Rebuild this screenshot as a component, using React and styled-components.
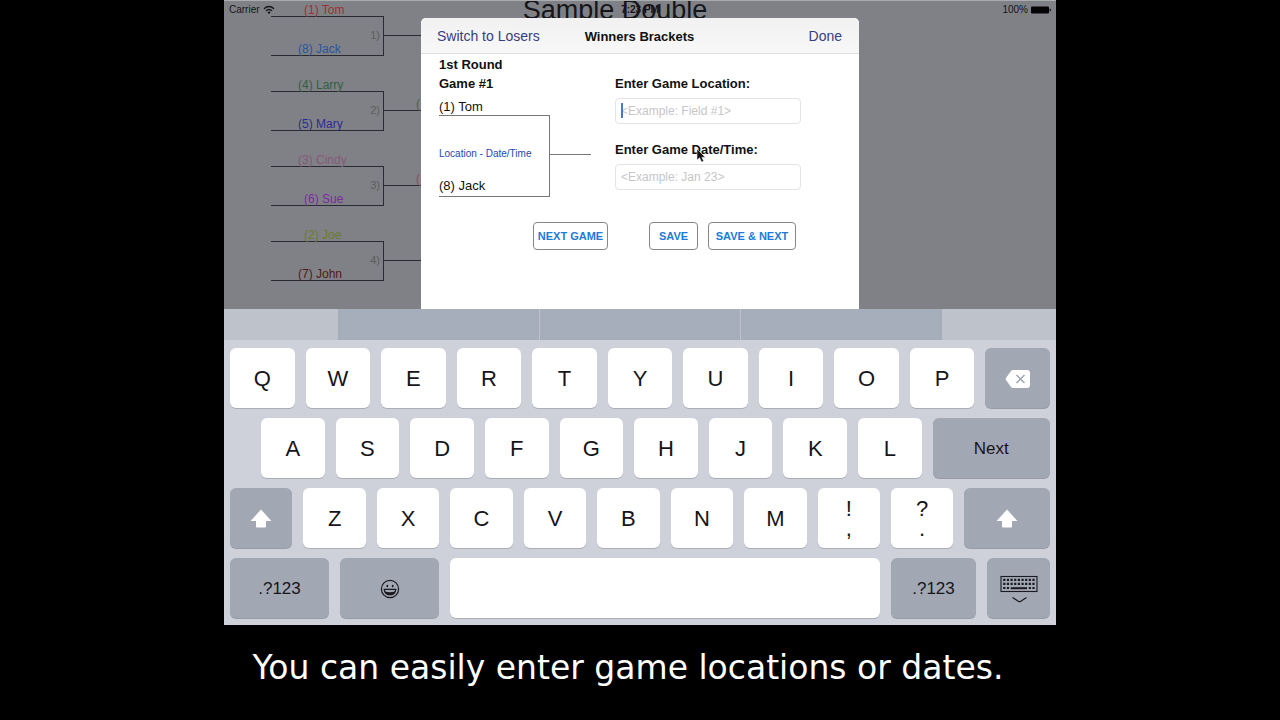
import React from 'react';
import styled, { createGlobalStyle } from 'styled-components';

const colors = {
  dim: '#808186',
  line: '#2b2b33',
  keyboard: '#ced1d9',
  darkKey: '#a2a7b4',
  navLink: '#35407f',
  action: '#1b7bd8',
  rule: '#777777'
};

const fonts = {
  ui: '"Liberation Sans", Arial, Helvetica, sans-serif',
  caption: '"DejaVu Sans", Verdana, sans-serif'
};

const GlobalStyle = createGlobalStyle`
  * {
    box-sizing: border-box;
  }
  body {
    margin: 0;
    background: #000;
    font-family: ${fonts.ui};
  }
  button, input {
    font-family: inherit;
    margin: 0;
  }
`;

const StyledPage = styled.main`
  min-height: 100vh;
  overflow: hidden;
`;

const StyledTablet = styled.div`
  width: 65%;
  margin: 0 auto;
`;

const StyledScreen = styled.div`
  position: relative;
  overflow: hidden;
  background: ${colors.dim};
  border-top: 1px solid #a9adae;
`;

const StyledStatusBar = styled.div`
  position: absolute;
  top: 0;
  left: 0;
  right: 0;
  display: grid;
  grid-template-columns: 1fr auto 1fr;
  align-items: center;
  padding: 3px 5px;
  font-size: 10px;
  line-height: 12px;
  color: #14141a;
`;

const StyledStatusGroup = styled.div`
  display: flex;
  align-items: center;
  gap: 3px;
  justify-content: ${({ $end }) => ($end ? 'flex-end' : 'flex-start')};
`;

const StyledBoard = styled.div`
  display: grid;
  width: 94%;
  padding: 1px 0 28px;
`;

const StyledBoardTitle = styled.h1`
  grid-area: 1 / 1;
  justify-self: center;
  margin: 0;
  height: 17px;
  display: flex;
  align-items: center;
  font-size: 27px;
  font-weight: 400;
  color: #16161a;
`;

const StyledRound = styled.div`
  grid-area: 1 / 1;
  display: flex;
  flex-direction: column;
  gap: 21px;
  padding-left: 47px;
`;

const StyledGame = styled.div`
  display: grid;
  grid-template-columns: 113px 40px;
  font-size: 12px;
  line-height: 11px;
`;

const StyledTopSlot = styled.div`
  height: 15px;
  display: flex;
  align-items: flex-end;
  padding-left: ${({ $short }) => ($short ? 33 : 27)}px;
  border-bottom: 1px solid ${colors.line};
  color: ${({ $color }) => $color};
`;

const StyledBottomSlot = styled.div`
  grid-column: 1;
  height: 39px;
  display: flex;
  flex-direction: column;
  justify-content: space-between;
  padding-top: 13px;
  border-right: 1px solid ${colors.line};
  border-bottom: 1px solid ${colors.line};
`;

const StyledGameNumber = styled.span`
  align-self: flex-end;
  padding-right: 3px;
  font-size: 11px;
  color: #5c5c62;
`;

const StyledPlayer = styled.span`
  padding-left: ${({ $short }) => ($short ? 33 : 27)}px;
  color: ${({ $color }) => $color};
`;

const StyledAdvance = styled.div`
  grid-column: 2;
  height: 19px;
  display: flex;
  align-items: flex-end;
  justify-content: flex-end;
  padding: 0 4px 0 0;
  border-bottom: 1px solid ${colors.line};
  color: ${({ $color }) => $color};
`;

const StyledOverlay = styled.div`
  position: absolute;
  inset: 17px 0 0;
  display: flex;
  justify-content: center;
`;

const StyledModal = styled.section`
  width: 438px;
  background: #fff;
  border-radius: 5px 5px 0 0;
  overflow: hidden;
`;

const StyledModalHeader = styled.header`
  display: grid;
  grid-template-columns: 1fr auto 1fr;
  align-items: center;
  height: 36px;
  padding: 1px 17px 0 16px;
  background: linear-gradient(#f1f1f2, #f8f8f8);
  border-bottom: 1px solid #dededf;
`;

const StyledNavButton = styled.button`
  justify-self: ${({ $end }) => ($end ? 'end' : 'start')};
  padding: 0;
  border: 0;
  background: none;
  font-size: 14px;
  color: ${colors.navLink};
`;

const StyledModalTitle = styled.h2`
  margin: 0;
  font-size: 13px;
  font-weight: 700;
  color: #111;
`;

const StyledModalBody = styled.div`
  display: grid;
  grid-template-columns: 152px 186px;
  column-gap: 24px;
  padding: 1px 18px;
  font-size: 13px;
  line-height: 19px;
  color: #111;
`;

const StyledMatchHeading = styled.h3`
  margin: 0;
  font-size: 13px;
  font-weight: 700;
`;

const StyledMatch = styled.div`
  display: grid;
  grid-template-columns: 111px 41px;
`;

const StyledHome = styled.div`
  height: 23px;
  padding-top: 4px;
  border-bottom: 1px solid ${colors.rule};
`;

const StyledAway = styled.div`
  grid-column: 1;
  height: 81px;
  display: flex;
  flex-direction: column;
  justify-content: space-between;
  padding: 28px 0 1px;
  border-right: 1px solid ${colors.rule};
  border-bottom: 1px solid ${colors.rule};
`;

const StyledPlace = styled.span`
  font-size: 10px;
  color: #2348b0;
`;

const StyledWinnerLine = styled.div`
  height: 39px;
  border-bottom: 1px solid ${colors.rule};
`;

const StyledForm = styled.form`
  display: contents;
`;

const StyledFields = styled.div`
  display: flex;
  flex-direction: column;
  gap: 16px;
  padding-top: 19px;
`;

const StyledField = styled.div`
  position: relative;
  display: flex;
  flex-direction: column;
  gap: 5px;
`;

const StyledLabel = styled.label`
  font-weight: 700;
`;

const StyledInput = styled.input`
  width: 100%;
  height: 26px;
  padding: 0 5px;
  border: 1px solid #e3e3e4;
  border-radius: 4px;
  background: #fff;
  font-size: 12px;
  color: #111;
  outline: none;
  &::placeholder {
    color: #c6c6c9;
  }
`;

const StyledCaret = styled.span`
  position: absolute;
  left: 6px;
  bottom: 6px;
  width: 2px;
  height: 15px;
  background: #4a78c8;
`;

const StyledPointer = styled.svg`
  position: absolute;
  left: 81px;
  top: 8px;
  width: 10px;
  height: 15px;
`;

const StyledActions = styled.div`
  grid-column: 1 / -1;
  display: flex;
  justify-content: flex-end;
  gap: 10px;
  padding: 25px 5px 0 0;
`;

const StyledActionButton = styled.button`
  width: ${({ $width }) => $width}px;
  height: 28px;
  padding: 0;
  margin-right: ${({ $apart }) => ($apart ? 31 : 0)}px;
  border: 1px solid #84868a;
  border-radius: 4px;
  background: #fff;
  font-size: 11px;
  font-weight: 700;
  color: ${colors.action};
`;

const StyledSuggestions = styled.div`
  display: grid;
  grid-template-columns: repeat(3, 1fr);
  gap: 1px;
  height: 31px;
  padding: 0 114px;
  background: #bec2ca;
`;

const StyledSuggestion = styled.div`
  background: #a7aebb;
`;

const StyledKeyboard = styled.div`
  background: ${colors.keyboard};
`;

const StyledRows = styled.div`
  display: flex;
  flex-direction: column;
  gap: 10px;
  padding: 8px 6px 7px;
`;

const StyledRow = styled.div`
  display: grid;
  grid-template-columns: ${({ $columns }) => $columns};
  gap: 11px;
  padding-left: ${({ $indent }) => ($indent ? 31 : 0)}px;
`;

const StyledKey = styled.button`
  display: flex;
  flex-direction: column;
  align-items: center;
  justify-content: center;
  min-width: 0;
  height: 60px;
  padding: 1px 0 0;
  border: 0;
  border-radius: 6px;
  background: ${({ $dark }) => ($dark ? colors.darkKey : '#fff')};
  box-shadow: 0 1px 0 ${({ $dark }) => ($dark ? '#979ba6' : '#aaaeb6')};
  font-size: ${({ $dark }) => ($dark ? 17 : 22)}px;
  line-height: 20px;
  color: #15151a;
`;

const StyledCaption = styled.p`
  margin: 0;
  padding: 23px 24px 0 0;
  font-family: ${fonts.caption};
  font-size: 33px;
  line-height: 40px;
  text-align: center;
  white-space: nowrap;
  color: #fff;
`;

const games = [
  { id: 1, top: '(1) Tom', topColor: '#9c3232', bottom: '(8) Jack', bottomColor: '#2756a0' },
  { id: 2, top: '(4) Larry', topColor: '#33603f', bottom: '(5) Mary', bottomColor: '#2d2a94', next: '#48604c' },
  { id: 3, top: '(3) Cindy', topColor: '#875878', bottom: '(6) Sue', bottomColor: '#7a2c9c', next: '#a04458' },
  { id: 4, top: '(2) Joe', topColor: '#6a7c2a', bottom: '(7) John', bottomColor: '#4c1c1c' }
];

const isShort = (name) => name.length < 8;

const WifiIcon = () => (
  <svg width="12" height="10" viewBox="0 0 12 10" fill="none" stroke="currentColor" strokeWidth="1.4">
    <path d="M1 3.8Q6 -0.6 11 3.8" />
    <path d="M2.9 5.8Q6 3.1 9.1 5.8" />
    <path d="M4.4 7.2Q6 6 7.6 7.2L6 9Z" fill="currentColor" stroke="none" />
  </svg>
);

const BatteryIcon = () => (
  <svg width="20" height="8" viewBox="0 0 20 8" fill="#050508">
    <rect x="0" y="0.5" width="18" height="7" rx="1" />
    <path d="M18.6 2.4Q20 3 20 4T18.6 5.6Z" />
  </svg>
);

const ShiftIcon = () => (
  <svg width="22" height="20" viewBox="0 0 22 20" fill="#fff">
    <path d="M11 0.5L21.4 12H16V17.5Q16 18.5 15 18.5H7Q6 18.5 6 17.5V12H0.6Z" />
  </svg>
);

const DeleteIcon = () => (
  <svg width="26" height="20" viewBox="0 0 26 20">
    <path d="M8 1H22Q25 1 25 4V16Q25 19 22 19H8Q7 19 6 18L1 11Q0.3 10 1 9L6 2Q7 1 8 1Z" fill="#fff" />
    <path d="M11.5 6L19.5 14M19.5 6L11.5 14" stroke="#9fa4b1" strokeWidth="1.5" fill="none" />
  </svg>
);

const EmojiIcon = () => (
  <svg width="20" height="20" viewBox="0 0 20 20" fill="none" stroke="#1a1a20" strokeWidth="1.2">
    <circle cx="10" cy="10" r="8.6" />
    <ellipse cx="7.3" cy="7" rx="0.9" ry="1.3" fill="#1a1a20" stroke="none" />
    <ellipse cx="12.7" cy="7" rx="0.9" ry="1.3" fill="#1a1a20" stroke="none" />
    <path d="M4.2 10.4H15.8Q15.2 15.8 10 15.8T4.2 10.4Z" />
    <path d="M4.8 12.6Q10 14 15.2 12.6Q14 15.8 10 15.8T4.8 12.6Z" fill="#1a1a20" stroke="none" />
  </svg>
);

const HideKeyboardIcon = () => (
  <svg width="38" height="28" viewBox="0 0 38 28" fill="none" stroke="#1a1a20">
    <rect x="1" y="1.5" width="36" height="15" strokeWidth="1.1" />
    <path d="M3.2 4.8H35M3.2 8.8H35" strokeWidth="2.2" strokeDasharray="2.2 1.45" />
    <path d="M3.2 13H9.1M28.75 13H34.7" strokeWidth="2.2" strokeDasharray="2.2 1.45" />
    <path d="M10.8 13.2H27" strokeWidth="2" />
    <path d="M12.5 22.5L18.6 26.4Q19.5 27 20.4 26.4L26.5 22.5" strokeWidth="1.2" />
  </svg>
);

const Pointer = () => (
  <StyledPointer viewBox="0 0 10 15">
    <path d="M1 1V12L3.6 9.8L5.6 14L7.6 13L5.8 9.2H9.2Z" fill="#111" stroke="#ddd" strokeWidth="0.6" />
  </StyledPointer>
);

const Key = ({ label, dark, children }) => (
  <StyledKey type="button" $dark={dark} aria-label={label}>{children}</StyledKey>
);

const renderLetters = (letters) => letters.split('').map((letter) => (
  <Key key={letter}>{letter}</Key>
));

const Board = () => (
  <StyledBoard>
    <StyledBoardTitle>Sample Double</StyledBoardTitle>
    <StyledRound>
      {games.map((game) => (
        <StyledGame key={game.id}>
          <StyledTopSlot $short={isShort(game.top)} $color={game.topColor}>{game.top}</StyledTopSlot>
          <StyledBottomSlot>
            <StyledGameNumber>{`${game.id})`}</StyledGameNumber>
            <StyledPlayer $short={isShort(game.bottom)} $color={game.bottomColor}>{game.bottom}</StyledPlayer>
          </StyledBottomSlot>
          <StyledAdvance $color={game.next}>{game.next && '('}</StyledAdvance>
        </StyledGame>
      ))}
    </StyledRound>
  </StyledBoard>
);

const StatusBar = () => (
  <StyledStatusBar>
    <StyledStatusGroup>
      Carrier
      <WifiIcon />
    </StyledStatusGroup>
    <strong>7:23 PM</strong>
    <StyledStatusGroup $end>
      100%
      <BatteryIcon />
    </StyledStatusGroup>
  </StyledStatusBar>
);

const GameModal = () => (
  <StyledModal>
    <StyledModalHeader>
      <StyledNavButton type="button">Switch to Losers</StyledNavButton>
      <StyledModalTitle>Winners Brackets</StyledModalTitle>
      <StyledNavButton type="button" $end>Done</StyledNavButton>
    </StyledModalHeader>
    <StyledModalBody>
      <div>
        <StyledMatchHeading>1st Round</StyledMatchHeading>
        <StyledMatchHeading>Game #1</StyledMatchHeading>
        <StyledMatch>
          <StyledHome>(1) Tom</StyledHome>
          <StyledAway>
            <StyledPlace>Location - Date/Time</StyledPlace>
            <span>(8) Jack</span>
          </StyledAway>
          <StyledWinnerLine />
        </StyledMatch>
      </div>
      <StyledForm>
        <StyledFields>
          <StyledField>
            <StyledLabel htmlFor="location">Enter Game Location:</StyledLabel>
            <StyledInput id="location" type="text" placeholder="<Example: Field #1>" />
            <StyledCaret />
          </StyledField>
          <StyledField>
            <StyledLabel htmlFor="date">Enter Game Date/Time:</StyledLabel>
            <StyledInput id="date" type="text" placeholder="<Example: Jan 23>" />
            <Pointer />
          </StyledField>
        </StyledFields>
        <StyledActions>
          <StyledActionButton type="button" $width={75} $apart>NEXT GAME</StyledActionButton>
          <StyledActionButton type="button" $width={49}>SAVE</StyledActionButton>
          <StyledActionButton type="button" $width={88}>SAVE &amp; NEXT</StyledActionButton>
        </StyledActions>
      </StyledForm>
    </StyledModalBody>
  </StyledModal>
);

const Keyboard = () => (
  <StyledKeyboard>
    <StyledSuggestions>
      <StyledSuggestion />
      <StyledSuggestion />
      <StyledSuggestion />
    </StyledSuggestions>
    <StyledRows>
      <StyledRow $columns="repeat(11, 1fr)">
        {renderLetters('QWERTYUIOP')}
        <Key dark label="Delete"><DeleteIcon /></Key>
      </StyledRow>
      <StyledRow $indent $columns="repeat(9, 64fr) 118fr">
        {renderLetters('ASDFGHJKL')}
        <Key dark>Next</Key>
      </StyledRow>
      <StyledRow $columns="repeat(10, 62fr) 85fr">
        <Key dark label="Shift"><ShiftIcon /></Key>
        {renderLetters('ZXCVBNM')}
        <Key><span>!</span><span>,</span></Key>
        <Key><span>?</span><span>.</span></Key>
        <Key dark label="Shift"><ShiftIcon /></Key>
      </StyledRow>
      <StyledRow $columns="99fr 99fr 430fr 85fr 63fr">
        <Key dark>.?123</Key>
        <Key dark label="Emoji"><EmojiIcon /></Key>
        <Key label="Space" />
        <Key dark>.?123</Key>
        <Key dark label="Hide keyboard"><HideKeyboardIcon /></Key>
      </StyledRow>
    </StyledRows>
  </StyledKeyboard>
);

const App = () => (
  <StyledPage>
    <GlobalStyle />
    <StyledTablet>
      <StyledScreen>
        <Board />
        <StatusBar />
        <StyledOverlay>
          <GameModal />
        </StyledOverlay>
      </StyledScreen>
      <Keyboard />
      <StyledCaption>You can easily enter game locations or dates.</StyledCaption>
    </StyledTablet>
  </StyledPage>
);

export default App;
